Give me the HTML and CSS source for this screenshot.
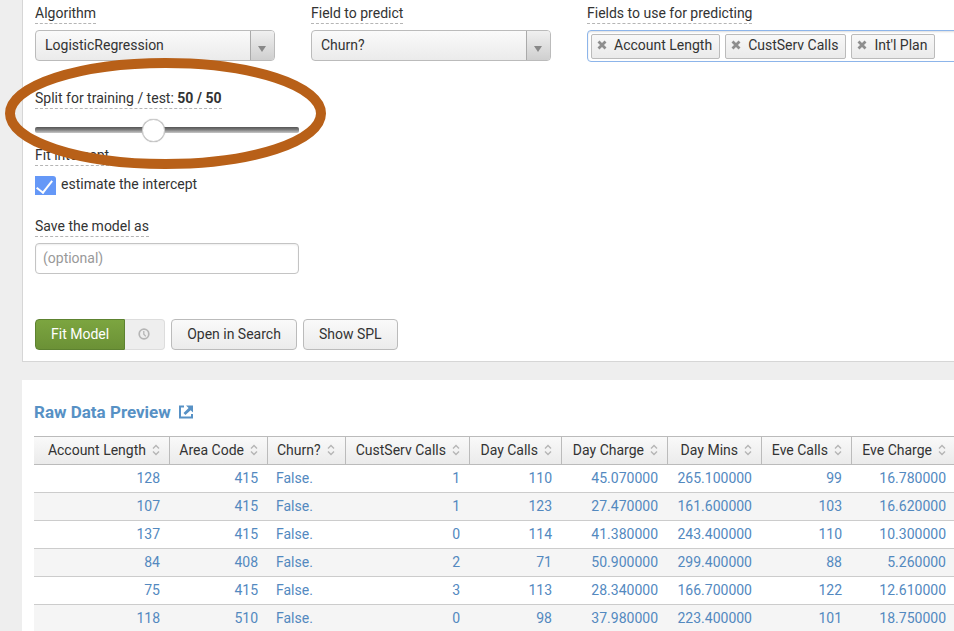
FILE: index.html
```html
<!DOCTYPE html>
<html lang="en">
<head>
<meta charset="utf-8">
<title>Fit Model</title>
<link rel="stylesheet" href="styles.css">
</head>
<body>
<svg class="defs" aria-hidden="true">
  <symbol id="sort" viewBox="0 0 8 12"><path d="M1 4.5 4 1.5 7 4.5M1 7.5 4 10.5 7 7.5" fill="none" stroke="#b5b5b5" stroke-width="1.4"/></symbol>
  <symbol id="cross" viewBox="0 0 10 10"><path d="M1.5 1.5 8.5 8.5M8.5 1.5 1.5 8.5" fill="none" stroke="#8e8e8e" stroke-width="2.8"/></symbol>
</svg>
<main class="page">
  <form class="panel settings">
    <div class="fields">
      <div class="field">
        <label class="caption" for="algorithm">Algorithm</label>
        <div class="select"><select id="algorithm"><option>LogisticRegression</option></select></div>
      </div>
      <div class="field">
        <label class="caption" for="target">Field to predict</label>
        <div class="select"><select id="target"><option>Churn?</option></select></div>
      </div>
      <div class="field field-wide">
        <span class="caption" id="features">Fields to use for predicting</span>
        <div class="tags" role="group" aria-labelledby="features">
          <span class="tag"><button type="button" class="remove" aria-label="Remove Account Length"><svg><use href="#cross"/></svg></button>Account Length</span>
          <span class="tag"><button type="button" class="remove" aria-label="Remove CustServ Calls"><svg><use href="#cross"/></svg></button>CustServ Calls</span>
          <span class="tag"><button type="button" class="remove" aria-label="Remove Int'l Plan"><svg><use href="#cross"/></svg></button>Int'l Plan</span>
        </div>
      </div>
    </div>
    <div class="split">
      <label class="caption" for="split">Split for training / test: <b>50 / 50</b></label>
      <input class="slider" id="split" type="range" min="10" max="100" value="50">
    </div>
    <div class="intercept">
      <span class="caption">Fit intercept</span>
      <label class="check"><input type="checkbox" checked><span>estimate the intercept</span></label>
    </div>
    <div class="save">
      <label class="caption" for="name">Save the model as</label>
      <input class="text" id="name" type="text" placeholder="(optional)">
    </div>
    <div class="actions">
      <div class="group">
        <button type="button" class="btn primary">Fit Model</button>
        <button type="button" class="btn schedule" disabled aria-label="Schedule"><svg viewBox="0 0 12 12"><circle cx="6" cy="6" r="4.8" fill="none" stroke="#b5b5b5" stroke-width="1.7"/><path d="M5.8 3V6.2L7.8 8.4" fill="none" stroke="#b5b5b5" stroke-width="1.3"/></svg></button>
      </div>
      <button type="button" class="btn">Open in Search</button>
      <button type="button" class="btn">Show SPL</button>
    </div>
    <svg class="highlight" viewBox="0 0 322 112" aria-hidden="true"><ellipse cx="160.5" cy="56.5" rx="155.5" ry="50.5" fill="none" stroke="#b86018" stroke-width="10"/></svg>
  </form>
  <section class="panel preview">
    <h2><a href="#preview">Raw Data Preview <svg viewBox="0 0 14 14"><path d="M5 1.5H1V12.5H13V9" fill="none" stroke="currentColor" stroke-width="2"/><path d="M7 0.5H14V7.5L11.7 5.2 6.4 10 4.5 8 9.6 3.1Z" fill="currentColor"/></svg></a></h2>
    <table id="preview">
      <colgroup><col class="c136"><col class="c98"><col class="c78"><col class="c124"><col class="c92"><col class="c106"><col class="c94"><col class="c90"><col class="c104"></colgroup>
      <thead><tr>
        <th>Account Length<svg><use href="#sort"/></svg></th><th>Area Code<svg><use href="#sort"/></svg></th><th class="word">Churn?<svg><use href="#sort"/></svg></th><th>CustServ Calls<svg><use href="#sort"/></svg></th><th>Day Calls<svg><use href="#sort"/></svg></th><th>Day Charge<svg><use href="#sort"/></svg></th><th>Day Mins<svg><use href="#sort"/></svg></th><th>Eve Calls<svg><use href="#sort"/></svg></th><th>Eve Charge<svg><use href="#sort"/></svg></th>
      </tr></thead>
      <tbody>
        <tr><td>128</td><td>415</td><td class="word">False.</td><td>1</td><td>110</td><td>45.070000</td><td>265.100000</td><td>99</td><td>16.780000</td></tr>
        <tr><td>107</td><td>415</td><td class="word">False.</td><td>1</td><td>123</td><td>27.470000</td><td>161.600000</td><td>103</td><td>16.620000</td></tr>
        <tr><td>137</td><td>415</td><td class="word">False.</td><td>0</td><td>114</td><td>41.380000</td><td>243.400000</td><td>110</td><td>10.300000</td></tr>
        <tr><td>84</td><td>408</td><td class="word">False.</td><td>2</td><td>71</td><td>50.900000</td><td>299.400000</td><td>88</td><td>5.260000</td></tr>
        <tr><td>75</td><td>415</td><td class="word">False.</td><td>3</td><td>113</td><td>28.340000</td><td>166.700000</td><td>122</td><td>12.610000</td></tr>
        <tr><td>118</td><td>510</td><td class="word">False.</td><td>0</td><td>98</td><td>37.980000</td><td>223.400000</td><td>101</td><td>18.750000</td></tr>
      </tbody>
    </table>
  </section>
</main>
</body>
</html>
```
FILE: styles.css
```css
* { box-sizing: border-box; }
body {
  margin: 0;
  height: 100vh;
  overflow: hidden;
  background: #eee;
  color: #333;
  font: 14px/20px Roboto, sans-serif;
}
button, input, select { font: inherit; color: inherit; margin: 0; }
.defs { position: absolute; width: 0; height: 0; }
.page { padding-left: 22px; }
.panel { background: #fff; }

/* Model settings */
.settings {
  position: relative;
  padding: 3px 0 11px 12px;
  border-left: 1px solid #d6d6d6;
  border-bottom: 1px solid #d6d6d6;
}
.fields { display: flex; gap: 36px; overflow: hidden; }
.field { flex: 0 0 240px; }
.field-wide { flex: 1 0 380px; margin-right: -12px; }
.caption {
  display: block;
  width: fit-content;
  border-bottom: 1px dashed #b5b5b5;
}
.select { position: relative; margin-top: 6px; }
.select select {
  display: block;
  width: 100%;
  height: 31px;
  padding: 0 34px 2px 9px;
  appearance: none;
  border: 1px solid #bbb;
  border-radius: 4px;
  background: linear-gradient(#fafafa, #ebebeb);
}
.select::before {
  content: "";
  position: absolute;
  top: 1px;
  right: 1px;
  bottom: 1px;
  width: 23px;
  border-left: 1px solid #aaa;
  border-radius: 0 3px 3px 0;
  background: linear-gradient(#f0f0f0, #cfcfcf);
  pointer-events: none;
}
.select::after {
  content: "";
  position: absolute;
  top: 16px;
  right: 9px;
  border: 4px solid transparent;
  border-top: 6px solid #888;
  border-bottom: 0;
  pointer-events: none;
}
.tags {
  display: flex;
  gap: 5px;
  height: 32px;
  margin-top: 6px;
  padding: 3px;
  border: 1px solid #8db5ea;
  border-radius: 4px;
  box-shadow: inset 0 1px 2px #ddd;
}
.tag {
  display: flex;
  align-items: center;
  height: 25px;
  padding: 0 7px 3px 5px;
  border: 1px solid #bbb;
  border-radius: 2px;
  background: linear-gradient(#f8f8f8, #eaeaea);
  white-space: nowrap;
}
.remove {
  display: flex;
  margin-right: 7px;
  padding: 0;
  border: 0;
  background: none;
}
.remove svg { width: 10px; height: 10px; }

.split { margin-top: 26px; }
.slider {
  display: block;
  width: 264px;
  height: 24px;
  margin-top: 9px;
  appearance: none;
  background: none;
}
.slider::-webkit-slider-runnable-track {
  height: 6px;
  border-radius: 2px;
  background: linear-gradient(#555, #777 40%, #c8c8c8);
}
.slider::-webkit-slider-thumb {
  appearance: none;
  width: 23px;
  height: 23px;
  margin-top: -8px;
  border: 1px solid #ccc;
  border-radius: 50%;
  background: #fff;
  box-shadow: 0 0 1px #999;
}

.intercept { margin-top: 3px; }
.check { display: flex; gap: 5px; width: fit-content; margin-top: 8px; }
.check input {
  appearance: none;
  width: 21px;
  height: 19px;
  margin-top: 2px;
  border-radius: 0 3px 0 0;
  background: #6598f7;
}
.check input::before {
  content: "";
  display: block;
  width: 7px;
  height: 14px;
  margin: 1px 0 0 5px;
  border: solid #fff;
  border-width: 0 2px 2px 0;
  transform: rotate(38deg);
}

.save { margin-top: 21px; }
.text {
  display: block;
  width: 264px;
  height: 31px;
  margin-top: 6px;
  padding: 0 7px 2px;
  border: 1px solid #c4c4c4;
  border-radius: 4px;
  box-shadow: inset 0 1px 2px #eee;
}
.text::placeholder { color: #999; opacity: 1; }

.actions { display: flex; gap: 6px; margin-top: 45px; }
.group { display: flex; }
.btn {
  height: 31px;
  padding: 0 15px 2px;
  border: 1px solid #bbb;
  border-radius: 4px;
  background: linear-gradient(#fafafa, #ebebeb);
}
.primary {
  border-color: #5d8230;
  border-radius: 4px 0 0 4px;
  background: linear-gradient(#7ca540, #6b9136);
  color: #fff;
}
.schedule {
  display: flex;
  align-items: center;
  justify-content: center;
  width: 40px;
  padding: 0 2px 2px 0;
  border-color: #ddd;
  border-left: 0;
  border-radius: 0 4px 4px 0;
  background: #eee;
}
.schedule svg { width: 12px; height: 12px; }
.highlight {
  position: absolute;
  top: 57px;
  left: -18px;
  width: 322px;
  height: 112px;
  pointer-events: none;
}

/* Data preview */
.preview {
  margin-top: 18px;
  padding: 22px 0 0 12px;
  overflow: hidden;
}
h2 { margin: 0 0 14px; font-size: 17px; line-height: 20px; font-weight: 700; }
h2 a { display: flex; align-items: center; gap: 8px; color: #5791c5; text-decoration: none; }
h2 svg { width: 14px; height: 14px; }
table { width: 922px; table-layout: fixed; border-collapse: separate; border-spacing: 0; }
.c136 { width: 136px; }
.c98 { width: 98px; }
.c78 { width: 78px; }
.c124 { width: 124px; }
.c92 { width: 92px; }
.c106 { width: 106px; }
.c94 { width: 94px; }
.c90 { width: 90px; }
.c104 { width: 104px; }
th, td { padding: 3px 9px 4px 0; text-align: right; white-space: nowrap; font-weight: 400; }
th {
  border: solid #bbb;
  border-width: 1px 1px 1px 0;
  background: linear-gradient(#f9f9f9, #ebebeb);
}
th svg { width: 8px; height: 12px; margin-left: 6px; vertical-align: -1px; }
td { padding-right: 10px; border-bottom: 1px solid #ccc; color: #5389bf; }
th.word { padding-left: 9px; text-align: left; }
td.word { padding-left: 8px; text-align: left; }
tbody tr:nth-child(even) { background: #f5f5f5; }
```
